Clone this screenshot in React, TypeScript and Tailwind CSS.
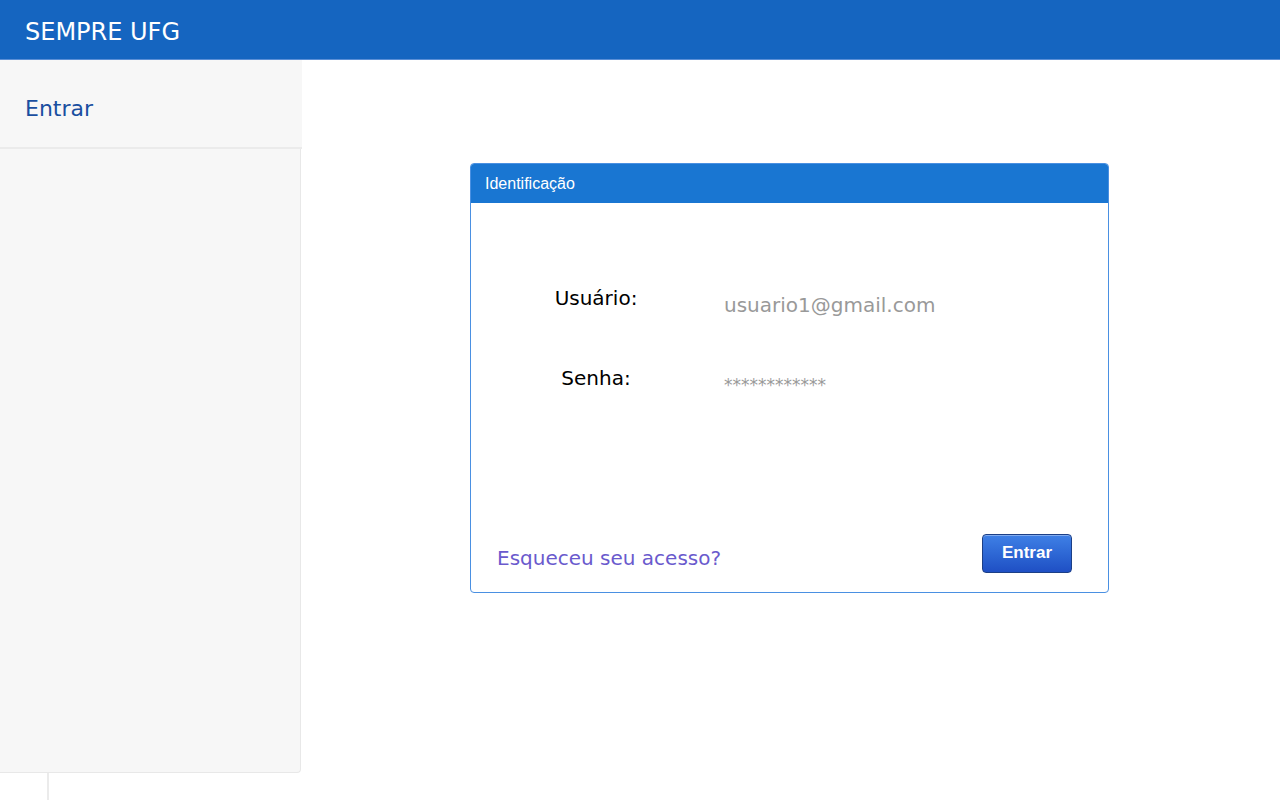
export default function App() {
  return (
    <div className="min-h-[800px] w-[1280px] bg-white font-['DejaVu_Sans',sans-serif] relative">
      <header className="h-[60px] bg-[#1565c0] border-b border-[#5b8fd6] flex items-center px-[25px] pt-[5px]">
        <h1 className="text-white text-[24px] leading-none">SEMPRE UFG</h1>
      </header>

      <div className="flex">
        <aside className="w-[301px] h-[713px] bg-[#f7f7f7] border-r border-b border-[#e8e8e8] rounded-br-[4px]">
          <div className="h-[89px] border-b-2 border-[#ebebeb] flex items-center px-[25px] pt-[10px] mr-[-2px] bg-[#f7f7f7]">
            <span className="text-[#1a4fa0] text-[22px]">Entrar</span>
          </div>
        </aside>

        <main className="flex-1">
          <div className="ml-[169px] mt-[103px] w-[639px] h-[430px] border border-[#4a90e2] rounded-[4px] flex flex-col overflow-hidden">
            <div className="h-[39px] bg-[#1976d2] flex items-center px-[14px]">
              <span className="text-white text-[16px] font-['Liberation_Sans',sans-serif]">
                Identificação
              </span>
            </div>

            <div className="pl-[65px] pt-[83px]">
              <div className="flex items-start">
                <div className="w-[120px] text-center text-black text-[20px] leading-[24px]">Usuário:</div>
                <div className="ml-[68px] mt-[7px] text-[#999999] text-[20px] leading-[24px]">usuario1@gmail.com</div>
              </div>
              <div className="flex items-start mt-[49px]">
                <div className="w-[120px] text-center text-black text-[20px] leading-[24px]">Senha:</div>
                <div className="ml-[68px] mt-[9px] text-[#999999] text-[17px] leading-[20px]">************</div>
              </div>
            </div>

            <div className="mt-auto flex items-center justify-between pl-[26px] pr-[36px] pb-[19px]">
              <a className="text-[#6a5acd] text-[20px] leading-[24px] mt-[9px]">Esqueceu seu acesso?</a>
              <button
                type="button"
                className="w-[90px] h-[39px] rounded-[4px] border border-[#1c3f86] bg-gradient-to-b from-[#3f80e6] to-[#1f4fc4] text-white font-bold text-[17px] font-['Liberation_Sans',sans-serif] shadow-[inset_0_1px_0_rgba(255,255,255,0.35)] pb-[2px]"
              >
                Entrar
              </button>
            </div>
          </div>
        </main>
      </div>

      <div className="absolute left-[47px] top-[773px] w-[2px] h-[27px] bg-[#ebebeb]" />
    </div>
  );
}
